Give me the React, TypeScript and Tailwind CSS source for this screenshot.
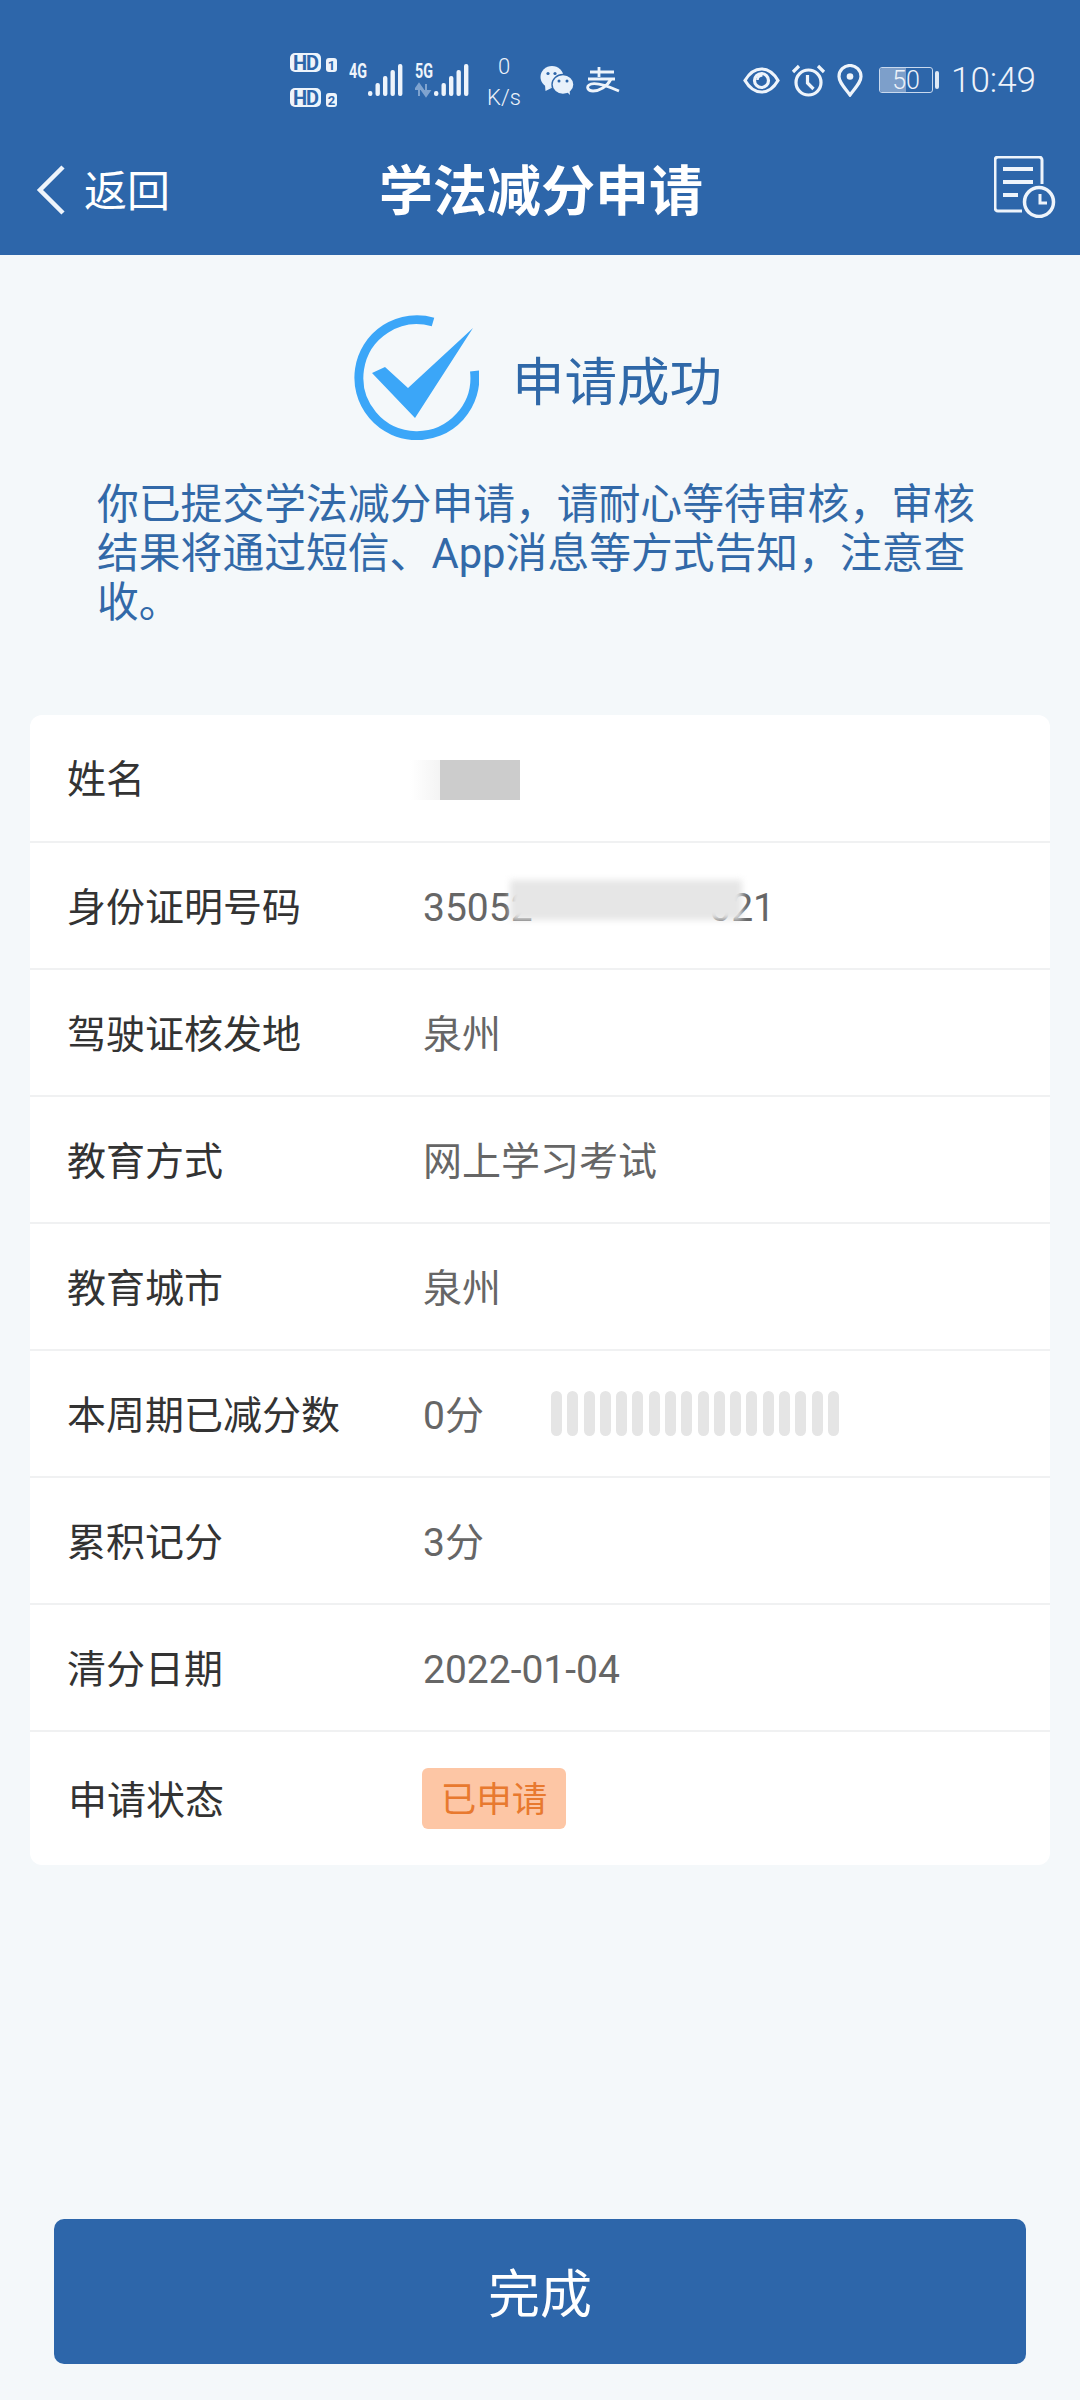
import React from "react";

const FONT = 'Roboto, "Noto Sans CJK SC", sans-serif';

function HdBadge({ n }: { n: string }) {
  return (
    <div className="flex items-end gap-[5px]">
      <span className="flex h-[19px] w-[31px] items-center justify-center rounded-[5px] bg-[#eef4fb] text-[20px] leading-none font-bold tracking-[-1px] text-[#2d66aa]">HD</span>
      <span className="flex h-[14px] w-[11px] items-center justify-center rounded-[3px] bg-[#eef4fb] text-[13px] leading-none font-bold text-[#2d66aa]">{n}</span>
    </div>
  );
}

function Signal({ label, arrows }: { label: string; arrows?: boolean }) {
  const bars = [
    [19, 28, 5],
    [26.5, 20, 13],
    [34, 13, 20],
    [41.5, 7, 26],
    [49, 1, 32],
  ];
  return (
    <svg width="54" height="44" viewBox="0 -5 54 44">
      <text x="0" y="15" fontSize="20" fontWeight="700" fill="#eef4fb" fontFamily="Roboto, sans-serif" textLength="18" lengthAdjust="spacingAndGlyphs">{label}</text>
      {arrows && (
        <path d="M4 33V21M4 21l-3.5 5h7zM11 21v12M11 33l-3.5-5h7z" stroke="#7fa3cf" strokeWidth="2" fill="#7fa3cf" />
      )}
      {bars.map(([x, y, h], i) => (
        <rect key={i} x={x} y={y} width="4.4" height={h} rx="2" fill="#eef4fb" />
      ))}
    </svg>
  );
}

function StatusBar() {
  return (
    <div className="flex h-[125px] items-center pt-[35px] pl-[290px] text-[#eef3fa]">
      <div className="flex w-[47px] flex-col gap-[16px]">
        <HdBadge n="1" />
        <HdBadge n="2" />
      </div>
      <div className="ml-[12px]"><Signal label="4G" /></div>
      <div className="ml-[12px]"><Signal label="5G" arrows /></div>
      <div className="ml-[16px] flex w-[38px] flex-col items-center pt-[4px] text-[22px] leading-[31px] font-light">
        <span>0</span>
        <span>K/s</span>
      </div>
      <svg className="ml-[17px]" width="34" height="29" viewBox="0 0 34 29">
        <ellipse cx="12" cy="11" rx="11.5" ry="11" fill="#e8f1fb" />
        <path d="M5 19l.5 6 6-3z" fill="#e8f1fb" />
        <ellipse cx="23" cy="18.5" rx="11" ry="10" fill="#e8f1fb" stroke="#2d66aa" strokeWidth="1.4" />
        <path d="M27 26l3 3-.5-5z" fill="#e8f1fb" />
        <circle cx="8" cy="7.5" r="1.6" fill="#2d66aa" />
        <circle cx="15" cy="7.5" r="1.6" fill="#2d66aa" />
        <circle cx="19" cy="15" r="1.5" fill="#2d66aa" />
        <circle cx="27" cy="15" r="1.5" fill="#2d66aa" />
      </svg>
      <svg className="ml-[12px]" width="34" height="26" viewBox="0 0 34 26" fill="none" stroke="#eef4fb" strokeWidth="2.8">
        <path d="M13 0v10M4 5h24M2 12h27" />
        <path d="M25 12C21 20 13 24 7 24 1.500 24 .5 20 3 18 7 15 17 17 33 24" />
      </svg>
      <svg className="ml-[123px]" width="37" height="27" viewBox="0 0 37 27" fill="none">
        <path d="M2 13.500C7 5 12 2 18.500 2S30 5 35 13.500c-5 8.500-10 11.500-16.500 11.500S7 22 2 13.500z" stroke="#eef4fb" strokeWidth="3.200" />
        <circle cx="18.500" cy="13.500" r="7" stroke="#eef4fb" strokeWidth="3.200" />
        <path d="M14.500 13a4.500 4.500 0 0 1 5-4.500" stroke="#eef4fb" strokeWidth="2.500" />
      </svg>
      <svg className="ml-[11px]" width="35" height="33" viewBox="0 0 35 33" fill="none" stroke="#eef4fb" strokeWidth="3.200">
        <circle cx="17.500" cy="18.500" r="12.500" />
        <path d="M16.500 11v8l6 6M2 8l6-6M33 8l-6-6" />
      </svg>
      <svg className="ml-[11px]" width="26" height="33" viewBox="0 0 26 33" fill="none" stroke="#eef4fb" strokeWidth="3.200">
        <path d="M13 31C7 23 2 18 2 12.500A11 11 0 0 1 24 12.500C24 18 19 23 13 31z" />
        <circle cx="13" cy="12.500" r="3.300" fill="#eef4fb" stroke="none" />
      </svg>
      <div className="ml-[16px] flex w-[60px] items-center gap-[2px]">
        <div className="relative flex h-[26px] w-[54px] items-center justify-center overflow-hidden rounded-[3px] border-[1.5px] border-[#c9d9ee]">
          <div className="absolute inset-y-0 left-0 w-[26px] bg-[#7d9fca]" />
          <span className="relative text-[25px] leading-none font-light">50</span>
        </div>
        <div className="h-[18px] w-[4px] rounded-full bg-[#dfe9f5]" />
      </div>
      <span className="ml-[12px] text-[35px] leading-none font-light">10:49</span>
    </div>
  );
}

function NavBar() {
  return (
    <div className="grid h-[130px] grid-cols-[1fr_auto_1fr] items-center pr-[24px] pl-[26px] text-white">
      <div className="ml-[10px] flex items-center gap-[18px]">
        <svg width="30" height="50" viewBox="0 0 30 50" fill="none" stroke="#eef4fb" strokeWidth="4.500">
          <path d="M27 2L4 25l23 23" />
        </svg>
        <span className="pt-[4px] text-[43px] leading-none">返回</span>
      </div>
      <h1 className="pt-[5px] text-[54px] leading-none font-bold">学法减分申请</h1>
      <svg className="mt-[-7px] justify-self-end" width="62" height="62" viewBox="0 0 62 62" fill="none" stroke="#eef4fb" strokeWidth="3">
        <path d="M28 55H4a3 3 0 0 1-3-3V4a3 3 0 0 1 3-3h41a3 3 0 0 1 3 3v24" />
        <path d="M9 13h30M9 26h30M9 39h15" strokeWidth="4" />
        <circle cx="45" cy="46" r="14.500" fill="#2d66aa" strokeWidth="3.500" />
        <path d="M46 38v9h7" strokeWidth="3" />
      </svg>
    </div>
  );
}

function Row({ label, first, children }: { label: string; first?: boolean; children: React.ReactNode }) {
  return (
    <div className={`relative flex items-center border-b-2 border-[#f0f1f2] pl-[37px] ${first ? "h-[128px]" : "h-[127px]"}`}>
      <span className="w-[356px] pt-[5px] text-[39px] leading-none text-[#333]">{label}</span>
      {children}
    </div>
  );
}

const V = ({ children }: { children: React.ReactNode }) => (
  <span className="pt-[5px] text-[39px] leading-none text-[#666]">{children}</span>
);

export default function App() {
  return (
    <div className="flex h-[2400px] w-[1080px] flex-col bg-[#f4f8fa]" style={{ fontFamily: FONT }}>
      <header className="bg-[#2d66aa]">
        <StatusBar />
        <NavBar />
      </header>

      <div className="mt-[60px] flex items-center gap-[33px] pl-[354px]">
        <svg width="125" height="125" viewBox="0 0 125 125" fill="none">
          <path d="M79 7A58 58 0 1 0 120.500 56" stroke="#3ba6f8" strokeWidth="9" />
          <path d="M18 58L31 52 54 73 119 13 61 103z" fill="#3ba6f8" />
        </svg>
        <span className="mt-[11px] text-[52.5px] leading-none text-[#2f68a8]">申请成功</span>
      </div>

      <p className="mt-[40px] pr-[90px] pl-[97px] text-[41.8px] leading-[49px] text-[#3269a8]">
        你已提交学法减分申请，请耐心等待审核，审核结果将通过短信、App消息等方式告知，注意查收。
      </p>

      <section className="mx-[30px] mt-[88px] overflow-hidden rounded-[12px] bg-white">
        <Row label="姓名" first>
          <div className="absolute top-[45px] left-[380px] h-[40px] w-[32px] bg-gradient-to-r from-white to-[#f3f3f3]" />
          <div className="absolute top-[45px] left-[410px] h-[40px] w-[80px] bg-[#cccccc]" />
        </Row>
        <Row label="身份证明号码">
          <div className="flex w-[352px] justify-between">
            <V>35052</V>
            <V>021</V>
          </div>
          <div className="absolute top-[37px] left-[480px] h-[40px] w-[232px] bg-[#e6e6e6] blur-[3px]" />
        </Row>
        <Row label="驾驶证核发地"><V>泉州</V></Row>
        <Row label="教育方式"><V>网上学习考试</V></Row>
        <Row label="教育城市"><V>泉州</V></Row>
        <Row label="本周期已减分数">
          <V>0分</V>
          <div className="ml-[67px] flex gap-[5.3px]">
            {Array.from({ length: 18 }).map((_, i) => (
              <div key={i} className="h-[45px] w-[11px] rounded-full bg-[#e5e5e5]" />
            ))}
          </div>
        </Row>
        <Row label="累积记分"><V>3分</V></Row>
        <Row label="清分日期"><V>2022-01-04</V></Row>
        <div className="flex h-[133px] items-center pl-[38px]">
          <span className="w-[354px] pt-[5px] text-[39px] leading-none text-[#333]">申请状态</span>
          <span className="flex h-[61px] w-[144px] items-center justify-center rounded-[6px] bg-[#fdc6a5] pt-[5px] text-[35.5px] leading-none text-[#e8792f]">已申请</span>
        </div>
      </section>

      <button className="mx-[54px] mt-auto mb-[36px] flex h-[145px] items-center justify-center rounded-[10px] bg-[#2d66aa] pt-[8px] text-[52px] leading-none text-white">
        完成
      </button>
    </div>
  );
}
